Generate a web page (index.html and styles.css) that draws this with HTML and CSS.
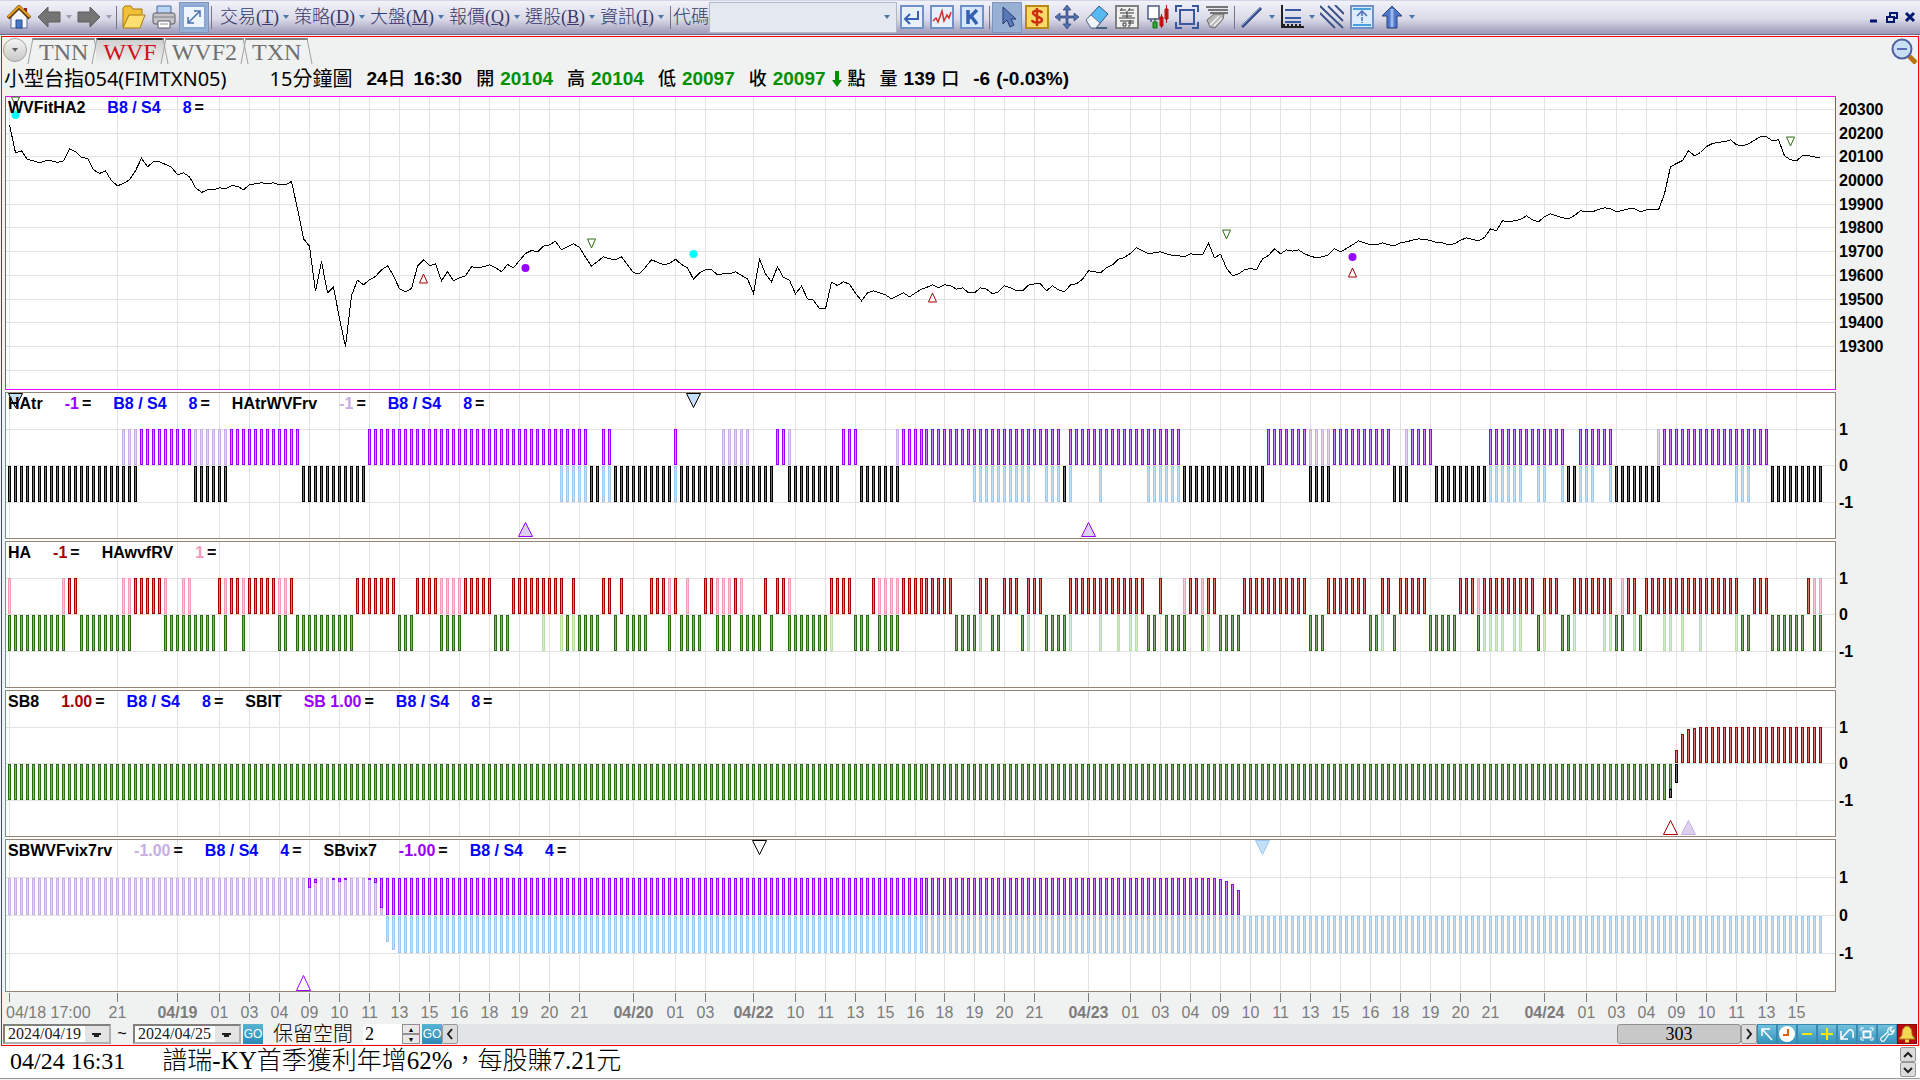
FILE: index.html
```html
<!DOCTYPE html>
<html lang="zh-Hant">
<head>
<meta charset="utf-8">
<title>小型台指054(FIMTXN05)</title>
<link rel="stylesheet" href="styles.css">
</head>
<body>
<header class="toolbar">
  <button class="tool" aria-label="首頁"><svg width="24" height="24" viewBox="0 0 24 24"><path d="M17 3h3v6h-3z" fill="#a02010"/><path d="M4 12v11h16V12l-8-8z" fill="#f4f6fc" stroke="#5868a0"/><path d="M1 13L12 2l11 11" fill="none" stroke="#5a3a10" stroke-width="4"/><path d="M1 12L12 1.500l11 10.500" fill="none" stroke="#e8a020" stroke-width="2"/><path d="M9 23v-8h6v8z" fill="#4878c8" stroke="#284888"/></svg></button>
  <button class="tool" aria-label="上一頁"><svg width="24" height="24" viewBox="0 0 24 24"><path d="M1 12L11 2v5h12v10H11v5z" fill="#747474" stroke="#5c5c5c"/></svg></button>
  <button class="caret dim" aria-label="上一頁清單"></button>
  <button class="tool" aria-label="下一頁"><svg width="24" height="24" viewBox="0 0 24 24"><path d="M23 12L13 2v5H1v10h12v5z" fill="#747474" stroke="#5c5c5c"/></svg></button>
  <button class="caret dim" aria-label="下一頁清單"></button>
  <i class="sep"></i>
  <button class="tool" aria-label="開啟"><svg width="24" height="24" viewBox="0 0 24 24"><path d="M1 22V3l2-2h6l2 3h9v5" fill="#f0c038" stroke="#a87808"/><path d="M1 23l6-13h16l-5 13z" fill="#ffe070" stroke="#a87808"/></svg></button>
  <button class="tool" aria-label="列印"><svg width="24" height="24" viewBox="0 0 24 24"><path d="M5 9V1h14v8" fill="#b8d4f4" stroke="#4868a0"/><rect x="1" y="8" width="22" height="11" rx="2" fill="#c4c4c8" stroke="#5c5c60"/><path d="M2 12h20" stroke="#808084"/><path d="M6 16h12v7H6z" fill="#fff" stroke="#5c5c60"/><path d="M8 19h8" stroke="#909090"/></svg></button>
  <button class="tool on" aria-label="全螢幕"><svg width="24" height="24" viewBox="0 0 24 24"><rect x="1" y="1" width="22" height="22" fill="#eef4fc" stroke="#88a8d8" stroke-width="2"/><path d="M7 17L17 7M12 6h6v6M6 12v6h6" fill="none" stroke="#4870b0" stroke-width="1.500"/></svg></button>
  <i class="sep"></i>
  <nav class="menus">
    <button class="menu">交易(<u>T</u>)<span class="tri"></span></button>
    <button class="menu">策略(<u>D</u>)<span class="tri"></span></button>
    <button class="menu">大盤(<u>M</u>)<span class="tri"></span></button>
    <button class="menu">報價(<u>Q</u>)<span class="tri"></span></button>
    <button class="menu">選股(<u>B</u>)<span class="tri"></span></button>
    <button class="menu">資訊(<u>I</u>)<span class="tri"></span></button>
  </nav>
  <i class="sep"></i>
  <label class="code-label" for="code">代碼</label>
  <span class="combo"><input id="code" type="text"><span class="tri"></span></span>
  <button class="tool" aria-label="輸入"><svg width="24" height="24" viewBox="0 0 24 24"><rect x="1" y="1" width="22" height="22" fill="#e8f0fc" stroke="#7090c8" stroke-width="2"/><path d="M18 6v8H6M10 9l-5 5 5 5" fill="none" stroke="#3860b0" stroke-width="2"/></svg></button>
  <button class="tool" aria-label="走勢圖"><svg width="24" height="24" viewBox="0 0 24 24"><rect x="1" y="1" width="22" height="22" fill="#e8f0fc" stroke="#7090c8" stroke-width="2"/><path d="M3 16l3-3 2 4 4-11 2 10 3-6 2 3 2-6" fill="none" stroke="#d03028" stroke-width="1.500"/></svg></button>
  <button class="tool" aria-label="K線圖"><svg width="24" height="24" viewBox="0 0 24 24"><rect x="1" y="1" width="22" height="22" fill="#d8e8fc" stroke="#7090c8" stroke-width="2"/><path d="M8 5v14M17 5l-8 8M11 11l6 8" fill="none" stroke="#3860b0" stroke-width="3.500"/></svg></button>
  <i class="sep"></i>
  <button class="tool on" aria-label="選取"><svg width="24" height="24" viewBox="0 0 24 24"><path d="M8 2v17l4-4 3 7 4-2-3-6h5z" fill="#5878b8" stroke="#283c70"/></svg></button>
  <button class="tool" aria-label="下單"><svg width="24" height="24" viewBox="0 0 24 24"><rect x="1" y="1" width="22" height="22" fill="#fcd868" stroke="#b88818" stroke-width="2"/><path d="M17 8c-1-3-9-3-9 0s9 4 9 7-9 4-10 0M12 3v18" fill="none" stroke="#c83010" stroke-width="2.500"/></svg></button>
  <button class="tool" aria-label="移動"><svg width="24" height="24" viewBox="0 0 24 24"><path d="M12 0l4 5h-3v6h6V8l5 4-5 4v-3h-6v6h3l-4 5-4-5h3v-6H5v3l-5-4 5-4v3h6V5H8z" fill="#5070b0" stroke="#2c4070" stroke-width=".7"/></svg></button>
  <button class="tool" aria-label="橡皮擦"><svg width="24" height="24" viewBox="0 0 24 24"><path d="M1 15L14 1l9 8-12 14H6z" fill="#58b8f0" stroke="#385880"/><path d="M1 15l5-5 9 8-4 5H6z" fill="#f0f4f8" stroke="#687890"/><path d="M11 23h11" stroke="#486080" stroke-width="2"/></svg></button>
  <button class="tool" aria-label="籌碼"><svg width="24" height="24" viewBox="0 0 24 24"><rect x="1" y="1" width="22" height="22" fill="#f0f0f0" stroke="#808080" stroke-width="2"/><path d="M7 3L5 6M6 5h5M15 3l-2 3M14 5h5M5 8h14M7 11h10M4 13h16M5 16h14M8 18v3h3v-3zM15 15v6h-2M13 18h6M12 6v7" fill="none" stroke="#383838"/></svg></button>
  <button class="tool" aria-label="K棒"><svg width="24" height="24" viewBox="0 0 24 24"><path d="M6 14h8V1H3v13h3M6 14v3" fill="#fff" stroke="#4c5c80" stroke-width="1.500"/><path d="M8 17h4v6H8zM10 13v4" fill="#30a830" stroke="#107010"/><path d="M15 12h3v9h-3zM16.500 9v14M20 4h3v10h-3zM21.500 0v18" fill="#e82018" stroke="#b01008"/></svg></button>
  <button class="tool" aria-label="框選"><svg width="24" height="24" viewBox="0 0 24 24"><rect x="5" y="5" width="14" height="14" fill="none" stroke="#3858a0" stroke-width="2"/><path d="M1 7V1h6M17 1h6v6M23 17v6h-6M7 23H1v-6" fill="none" stroke="#3858a0" stroke-width="2"/></svg></button>
  <button class="tool" aria-label="圖層"><svg width="24" height="24" viewBox="0 0 24 24"><path d="M1 2h22M3 5h20M5 8h18" stroke="#505050" stroke-width="1.500"/><path d="M2 15l7-6h10l-1 5-8 9-5-1z" fill="#b8b8b8" stroke="#686868"/><path d="M5 20l9-9M9 21l8-8" stroke="#f0f0f0" stroke-width="1.500"/></svg></button>
  <i class="sep"></i>
  <button class="tool" aria-label="畫線"><svg width="24" height="24" viewBox="0 0 24 24"><path d="M2 22L21 3" stroke="#304880" stroke-width="3"/><path d="M2 21L20 3" stroke="#7898d8"/></svg></button>
  <button class="caret" aria-label="畫線清單"></button>
  <button class="tool" aria-label="水平線"><svg width="24" height="24" viewBox="0 0 24 24"><path d="M2 0v22h22" fill="none" stroke="#202020" stroke-width="2"/><path d="M5 5h16M5 13h16M5 17h16" stroke="#3858a0" stroke-width="2"/><path d="M3 20h20" stroke="#202020" stroke-width="2" stroke-dasharray="2 2"/></svg></button>
  <button class="caret" aria-label="水平線清單"></button>
  <button class="tool" aria-label="平行線"><svg width="24" height="24" viewBox="0 0 24 24"><path d="M0 8l15 15M0 1l23 22M8 1l15 15M15 0l9 9" stroke="#3c5488" stroke-width="2"/></svg></button>
  <button class="tool" aria-label="頂部"><svg width="24" height="24" viewBox="0 0 24 24"><rect x="1" y="1" width="22" height="22" fill="#dcecfc" stroke="#7090c8" stroke-width="2"/><path d="M3 4h18M3 20h18" stroke="#48a0e0" stroke-width="2"/><path d="M12 7v11" stroke="#4868b8" stroke-width="1.500" stroke-dasharray="4 1"/><path d="M7 11l5-5 5 5" fill="none" stroke="#4868b8" stroke-width="1.500"/></svg></button>
  <button class="tool" aria-label="箭頭"><svg width="24" height="24" viewBox="0 0 24 24"><path d="M12 1L2 11h5v12h10V11h5z" fill="#5078c8" stroke="#284080"/><path d="M12 4v18" stroke="#98b8f0" stroke-width="3"/></svg></button>
  <button class="caret" aria-label="箭頭清單"></button>
  <span class="window-buttons">
    <button aria-label="最小化"><svg width="12" height="12"><path d="M2 10h7" stroke="#001870" stroke-width="3"/></svg></button>
    <button aria-label="還原"><svg width="12" height="12"><path d="M4 5V2h7v5H8M1 6h7v5H1z" fill="none" stroke="#001870" stroke-width="2"/></svg></button>
    <button aria-label="關閉"><svg width="12" height="12"><path d="M2 2l8 8M10 2l-8 8" stroke="#001870" stroke-width="3"/></svg></button>
  </span>
</header>

<main class="frame">
  <div class="tabs">
    <button class="tab-list" aria-label="分頁清單"><span class="tri"></span></button>
    <button class="tab">TNN</button>
    <button class="tab active">WVF</button>
    <button class="tab">WVF2</button>
    <button class="tab">TXN</button>
    <button class="zoom-out" aria-label="縮小"><svg width="26" height="26" viewBox="0 0 26 26"><path d="M18 18l7 7" stroke="#c07018" stroke-width="5"/><circle cx="11" cy="11" r="9.500" fill="#c8e0f4" stroke="#5060a0" stroke-width="2"/><path d="M6 11h10" stroke="#3848a0" stroke-width="1.500"/></svg></button>
  </div>
  <h1 class="quote">
    <span class="name">小型台指054(FIMTXN05)</span>
    <span class="period">15分鐘圖</span>
    <span class="pair stamp"><b>24<i>日</i></b><b>16:30</b></span>
    <span class="pair"><i>開</i><b class="down">20104</b></span>
    <span class="pair"><i>高</i><b class="down">20104</b></span>
    <span class="pair"><i>低</i><b class="down">20097</b></span>
    <span class="pair"><i>收</i><b class="down">20097</b><svg width="10" height="18"><path d="M3 1h4v9h3l-5 7-5-7h3z" fill="#009000"/></svg><i>點</i></span>
    <span class="pair"><i>量</i><b>139</b><i>口</i></span>
    <span class="pair"><b>-6</b><b>(-0.03%)</b></span>
  </h1>

  <div class="charts">
    <section class="row">
      <div class="plot"><svg class="canvas" id="price"></svg>
        <p class="legend"><b>WVFitHA2</b><b class="blue">B8 / S4</b><b><em class="blue">8</em>=</b></p></div>
      <svg class="scale" id="price-scale"></svg>
    </section>
    <section class="row">
      <div class="plot"><svg class="canvas" id="hatr"></svg>
        <p class="legend"><b>HAtr</b><b><em class="purple">-1</em>=</b><b class="blue">B8 / S4</b><b><em class="blue">8</em>=</b><b>HAtrWVFrv</b><b><em class="lavender">-1</em>=</b><b class="blue">B8 / S4</b><b><em class="blue">8</em>=</b></p></div>
      <svg class="scale" id="hatr-scale"></svg>
    </section>
    <section class="row">
      <div class="plot"><svg class="canvas" id="ha"></svg>
        <p class="legend"><b>HA</b><b><em class="red">-1</em>=</b><b>HAwvfRV</b><b><em class="pink">1</em>=</b></p></div>
      <svg class="scale" id="ha-scale"></svg>
    </section>
    <section class="row">
      <div class="plot"><svg class="canvas" id="sb"></svg>
        <p class="legend"><b>SB8</b><b><em class="red">1.00</em>=</b><b class="blue">B8 / S4</b><b><em class="blue">8</em>=</b><b>SBIT</b><b><em class="purple">SB 1.00</em>=</b><b class="blue">B8 / S4</b><b><em class="blue">8</em>=</b></p></div>
      <svg class="scale" id="sb-scale"></svg>
    </section>
    <section class="row">
      <div class="plot"><svg class="canvas" id="vix"></svg>
        <p class="legend"><b>SBWVFvix7rv</b><b><em class="lavender">-1.00</em>=</b><b class="blue">B8 / S4</b><b><em class="blue">4</em>=</b><b>SBvix7</b><b><em class="purple">-1.00</em>=</b><b class="blue">B8 / S4</b><b><em class="blue">4</em>=</b></p></div>
      <svg class="scale" id="vix-scale"></svg>
    </section>
    <div class="row axis-row"><svg class="axis" id="time"></svg></div>
  </div>

  <footer class="controls">
    <select class="date" aria-label="起始日期"><option>2024/04/19</option></select>
    <span class="tilde">~</span>
    <select class="date" aria-label="結束日期"><option>2024/04/25</option></select>
    <button class="go">GO</button>
    <label class="space-label" for="space">保留空間</label>
    <span class="spin"><input id="space" type="text" value="2"><span class="spin-buttons"><button aria-label="增加">▴</button><button aria-label="減少">▾</button></span></span>
    <button class="go">GO</button>
    <button class="arrow" aria-label="向左捲動"><svg width="8" height="12"><path d="M6 1L2 6l4 5" fill="none" stroke="#202020" stroke-width="2"/></svg></button>
    <div class="track"><button class="thumb">303</button></div>
    <button class="arrow" aria-label="向右捲動"><svg width="8" height="12"><path d="M2 1l4 5-4 5" fill="none" stroke="#202020" stroke-width="2"/></svg></button>
    <button class="mini" aria-label="左上"><svg width="18" height="18"><path d="M4 11V4h8M4 4l10 11" fill="none" stroke="#fff" stroke-width="1.500"/></svg></button>
    <button class="mini" aria-label="時間"><svg width="18" height="18"><circle cx="9" cy="9" r="8" fill="#fff"/><path d="M10 4v6H5" fill="none" stroke="#e06010" stroke-width="2"/></svg></button>
    <button class="mini" aria-label="縮小間距"><svg width="18" height="18"><path d="M4 9h10" stroke="#ffe800" stroke-width="2"/></svg></button>
    <button class="mini" aria-label="放大間距"><svg width="18" height="18"><path d="M3 9h12M9 3v12" stroke="#ffe800" stroke-width="2"/></svg></button>
    <button class="mini" aria-label="還原"><svg width="18" height="18"><path d="M3 6v8h7M3 14l8-9c4-1 5 3 4 8" fill="none" stroke="#fff" stroke-width="1.500"/></svg></button>
    <button class="mini" aria-label="全圖"><svg width="18" height="18"><rect x="5.500" y="6.500" width="7" height="6" fill="none" stroke="#fff" stroke-width="2"/><path d="M3 6V3h3M12 3h3v3M15 12v3h-3M6 15H3v-3" fill="none" stroke="#fff"/></svg></button>
    <button class="mini" aria-label="設定"><svg width="18" height="18"><path d="M3 13l7-6c-1-3 1-5 4-5l-2 3 2 2 2-2c0 3-2 5-5 4l-5 7c-2 1-4-1-3-3z" fill="none" stroke="#fff" stroke-width="1.200"/></svg></button>
    <button class="mini bell" aria-label="警示"><svg width="18" height="18"><path d="M9 1c-4 1-5 4-5 9l-3 4h16l-3-4c0-5-1-8-5-9z" fill="#f0d850" stroke="#a88820"/><path d="M7 16h4" stroke="#f0d850" stroke-width="3"/></svg></button>
  </footer>
</main>

<section class="news">
  <p><time>04/24 16:31</time><a class="headline" href="#">譜瑞-KY首季獲利年增62%，每股賺7.21元</a></p>
  <div class="news-scroll">
    <button class="arrow" aria-label="上一則"><svg width="12" height="8"><path d="M2 6l4-4 4 4" fill="none" stroke="#202020" stroke-width="2"/></svg></button>
    <button class="arrow" aria-label="下一則"><svg width="12" height="8"><path d="M2 2l4 4 4-4" fill="none" stroke="#202020" stroke-width="2"/></svg></button>
  </div>
</section>
<script src="chart.js"></script>
</body>
</html>
```
FILE: styles.css
```css
* { box-sizing: border-box; }
body {
  margin: 0;
  height: 100vh;
  min-height: 640px;
  display: flex;
  flex-direction: column;
  background: #f0f2f1;
  font-family: "Liberation Sans", "Noto Sans CJK TC", sans-serif;
  font-size: 16px;
  color: #000;
}
button { border: 0; padding: 0; background: none; font: inherit; color: inherit; }
svg { display: block; }
.tri { border: 3px solid transparent; border-top: 4px solid #4878a8; border-bottom: 0; }

/* toolbar */
.toolbar {
  display: flex;
  flex: none;
  align-items: center;
  height: 35px;
  padding: 0 4px 1px;
  background: linear-gradient(#f2f2fa, #dadae8 55%, #9c98b8);
  border-top: 1px solid #d4d4e8;
  border-bottom: 1px solid #6c6c8c;
}
.tool { width: 30px; height: 31px; display: grid; place-items: center; flex: none; }
.tool.on { background: #98b0d4; border: 1px solid #7c94bc; }
.caret { width: 10px; height: 24px; display: grid; place-items: center; flex: none; }
.caret::before { content: ""; border: 3px solid transparent; border-top: 4px solid #4878a8; border-bottom: 0; }
.caret.dim::before { border-top-color: #a0a0b0; }
.sep { width: 1px; height: 23px; margin: 0 2px; background: #74748c; flex: none; }
.menus { display: flex; gap: 5px; padding: 0 4px 0 6px; }
.menu {
  display: flex;
  align-items: center;
  font: 300 18px/24px "Liberation Serif", "Noto Sans CJK TC", serif;
  color: #38386c;
}
.menu .tri { margin-left: 4px; }
.code-label { font: 300 18px/24px "Liberation Serif", "Noto Sans CJK TC", serif; color: #38386c; }
.combo { display: flex; align-items: center; width: 188px; height: 31px; padding-right: 6px; background: #e4e8f0; border: 1px solid #b0b8c8; }
.combo input { flex: 1; min-width: 0; border: 0; background: none; font: inherit; }
.window-buttons { display: flex; gap: 6px; margin-left: auto; }

/* framed work area */
.frame { flex: 1 1 0; min-height: 0; display: flex; flex-direction: column; margin: 1px 1px 0; border: 1px solid #f00; }
.tabs { display: flex; flex: none; gap: 1px; height: 26px; padding: 1px 1px 0; align-items: flex-start; }
.tab-list { display: grid; place-items: center; width: 24px; height: 24px; margin-right: 4px; border: 1px solid #a0a0a0; border-radius: 12px; background: linear-gradient(#f4f4f4, #c8c8c8); }
.tab-list .tri { border-top-color: #606060; }
.tab {
  position: relative;
  height: 26px;
  padding: 0 7px;
  border-top: 2px solid #808080;
  font: 24px/24px "Liberation Serif", serif;
  color: #707070;
}
.tab::before, .tab::after { content: ""; position: absolute; top: -2px; bottom: 0; width: 1px; background: #a0a0a0; }
.tab::before { left: -2px; transform: skewX(-11deg); }
.tab::after { right: -2px; transform: skewX(11deg); }
.tab.active { border-top-color: #303030; background: linear-gradient(#d0d0d0, #f0f2f1); color: #d01020; }
.zoom-out { margin-left: auto; }
.quote { display: flex; flex: none; align-items: center; gap: 14px; height: 33px; margin: 0; padding: 0 2px 2px; font-size: 20px; font-weight: 400; line-height: 28px; white-space: nowrap; }
.quote i { font-style: normal; font-weight: 500; font-size: 18px; }
.quote b { font-size: 19px; }
.name, .period { font-family: "Noto Sans", "Noto Sans CJK TC", sans-serif; }
.name { margin-right: 29px; }
.pair { display: flex; align-items: center; gap: 6px; }
.pair b { display: flex; align-items: center; }
.pair.stamp { gap: 8px; }
.down { color: #009000; }

/* panels */
.charts {
  flex: 1 1 0;
  min-height: 0;
  display: grid;
  grid-template-rows: minmax(0, 294fr) minmax(0, 147fr) minmax(0, 147fr) minmax(0, 147fr) minmax(0, 153fr) 29px;
  row-gap: 2px;
  padding-left: 3px;
  background: linear-gradient(#fff, #fff) no-repeat 3px 0 / calc(100% - 85px) calc(100% - 31px);
}
.row { display: grid; grid-template-columns: minmax(0, 1fr) 82px; grid-template-rows: minmax(0, 1fr); min-height: 0; }
.plot { display: grid; grid-template: minmax(0, 1fr) / minmax(0, 1fr); min-width: 0; min-height: 0; background: #fff; }
.plot > * { grid-area: 1 / 1; }
.canvas { width: 100%; height: 100%; min-height: 0; }
.scale { width: 82px; height: 100%; overflow: visible; font-weight: 700; }
.axis { width: 100%; height: 30px; overflow: visible; fill: #7c7c7c; }
.axis-row { margin-top: -2px; height: 31px; }
.legend { display: flex; gap: 22px; margin: 3px 3px; height: 18px; line-height: 18px; white-space: nowrap; z-index: 1; }
.legend em { font-style: normal; padding-right: 3px; }
.blue { color: #0000ff; }
.purple { color: #9900ff; }
.lavender { color: #c8aee4; }
.red { color: #a80000; }
.pink { color: #f49ab8; }

/* bottom controls */
.controls { display: flex; flex: none; align-items: center; height: 22px; padding: 0 1px; }
.date {
  width: 108px; height: 20px; padding: 0 0 0 3px; appearance: none;
  border: 2px solid #808080; border-right-color: #b0b0b0; border-bottom-color: #b0b0b0; border-radius: 0;
  font: 16px/16px "Liberation Serif", serif; color: #202020;
  background: linear-gradient(#202020, #202020) no-repeat right 10px top 9px / 5px 2px, linear-gradient(#202020, #202020) no-repeat right 8px top 7px / 9px 2px, linear-gradient(#e4e4e4, #e4e4e4) no-repeat right / 24px 100%, #fff;
}
.tilde { width: 22px; text-align: center; }
.go { width: 20px; height: 20px; margin-left: 2px; background: linear-gradient(#58b4d4, #2c88b4); color: #fff; font-size: 12px; line-height: 20px; }
.space-label { padding: 0 10px 0 10px; font-size: 20px; font-weight: 300; line-height: 20px; }
.spin { display: flex; height: 20px; background: #fff; }
.spin input { width: 39px; border: 0; padding: 0 2px; font: 18px/20px "Liberation Serif", serif; }
.spin-buttons { display: grid; width: 18px; }
.spin-buttons button { height: 10px; border: 1px solid #909090; background: #e8e8e8; font-size: 8px; line-height: 7px; }
.arrow { display: grid; place-items: center; width: 16px; height: 20px; border: 1px solid #989898; border-radius: 2px; background: #dcdcdc; flex: none; }
.track { flex: 1; display: flex; justify-content: flex-end; height: 20px; background: #e2e4e6; }
.thumb { width: 124px; border: 1px solid #909090; border-radius: 3px; background: #c8c8c8; font: 18px/18px "Liberation Serif", serif; }
.mini { display: grid; place-items: center; width: 20px; height: 20px; border: 1px solid #3888b0; background: linear-gradient(#70c0dc, #3494bc); flex: none; }
.mini.bell { background: #b80c10; border-color: #900000; }

/* news ticker */
.news { display: flex; flex: none; justify-content: space-between; height: 33px; margin-bottom: 1px; padding-left: 10px; background: #fff; border-bottom: 1px solid #989898; }
.news p { display: flex; gap: 37px; margin: 0; font: 300 24px/30px "Liberation Serif", "Noto Sans CJK TC", serif; }
.news time { font-weight: 400; }
.headline { font-size: 25px; color: #000; text-decoration: none; }
.news-scroll { display: grid; grid-template-rows: 1fr 1fr; width: 20px; padding: 1px 0; }
.news-scroll .arrow { height: auto; }
```
FILE: chart.js
```js
const W = 1831;
const COLORS = {
  p: ['#9900ff', '#cc88ff'], v: ['#c8aee4', '#e0d4f0'], k: ['#000000', '#707070'],
  b: ['#9ccaf2', '#c4e0f8'], r: ['#a80000', '#d87878'], n: ['#f49ab8', '#fac8d8'],
  g: ['#2c6c10', '#88b078'], l: ['#b8e0a4', '#d4ecc8']
};
// left-to-right centre of bar i
const X = i => 4.5 + 6 * i - (i >= 153 ? 1 : 0);
const rect = (i, y1, y2, c) =>
  `<rect x="${X(i) - 1}" y="${y1 + 0.5}" width="2" height="${Math.max(y2 - y1 - 1, 1)}" fill="${COLORS[c][1]}" stroke="${COLORS[c][0]}"/>`;
// "p22-30" draws colour p over bars 22..30
const runs = (text, y1, y2) => text.split(' ').map(t => {
  const [a, z = a] = t.slice(1).split('-').map(Number);
  let s = '';
  for (let i = a; i <= z; i++) s += rect(i, y1, y2, t[0]);
  return s;
}).join('');
const mark = (i, y, up, h, hw, stroke, fill = '#fff') => {
  const x = X(i), tip = up ? y : y + h, base = up ? y + h : y;
  return `<path d="M${x} ${tip}L${x + hw} ${base}H${x - hw}z" fill="${fill}" stroke="${stroke}"/>`;
};
const dot = (i, y, c) => `<circle cx="${X(i)}" cy="${y}" r="4" fill="${c}"/>`;

const TIMES = [[0, ''], [18, '21'], [28, '04/19'], [35, '01'], [40, '03'], [45, '04'], [50, '09'], [55, '10'], [60, '11'], [65, '13'], [70, '15'], [75, '16'], [80, '18'], [85, '19'], [90, '20'], [95, '21'],
  [104, '04/20'], [111, '01'], [116, '03'], [124, '04/22'], [131, '10'], [136, '11'], [141, '13'], [146, '15'], [151, '16'], [156, '18'], [161, '19'], [166, '20'], [171, '21'],
  [180, '04/23'], [187, '01'], [192, '03'], [197, '04'], [202, '09'], [207, '10'], [212, '11'], [217, '13'], [222, '15'], [227, '16'], [232, '18'], [237, '19'], [242, '20'], [247, '21'],
  [256, '04/24'], [263, '01'], [268, '03'], [273, '04'], [278, '09'], [283, '10'], [288, '11'], [293, '13'], [298, '15']];

function panel(id, h, border, levels, body) {
  const svg = document.getElementById(id);
  svg.setAttribute('viewBox', `0 0 ${W} ${h}`);
  svg.setAttribute('preserveAspectRatio', 'none');
  let s = `<g shape-rendering="crispEdges"><rect x=".5" y=".5" width="${W - 1}" height="${h - 1}" fill="none" stroke="${border}"/><g stroke="#e2e2e2">`;
  for (const [y] of levels) s += `<path d="M1 ${y + 0.5}H${W - 1}"/>`;
  for (const [i] of TIMES) s += `<path d="M${X(i)} 1V${h - 1}"/>`;
  svg.innerHTML = s + '</g></g>' + body;
  document.getElementById(id + '-scale').innerHTML = levels.filter(l => l[1] !== '')
    .map(([y, t]) => `<text x="3" y="${y / h * 100}%" dy="6">${t}</text>`).join('');
}
const crisp = s => `<g shape-rendering="crispEdges">${s}</g>`;

// price samples, one per bar, in thirds of a pixel from the top of the scale
const PRICE = [103,187,181,207,211,217,211,211,216,211,175,183,202,203,238,249,241,271,286,279,268,241,203,229,214,214,222,230,253,247,259,291,306,298,298,292,295,286,287,298,283,280,277,280,277,283,283,273,355,445,467,602,513,607,590,684,768,615,569,583,568,558,538,526,556,595,604,594,527,508,526,520,571,544,571,562,556,529,532,529,523,531,544,522,532,510,489,480,484,467,463,452,478,469,460,471,500,527,513,499,505,508,499,523,547,
  550,530,508,515,523,519,506,522,532,566,547,538,538,553,550,550,544,555,565,609,506,550,574,529,561,569,610,587,625,629,655,655,575,585,574,581,608,631,607,601,607,613,625,616,607,619,607,596,591,583,592,583,585,596,592,607,607,592,596,610,604,586,592,601,601,584,580,580,601,586,598,604,583,580,566,541,544,547,532,523,506,501,488,472,481,490,487,484,490,495,496,499,490,492,493,458,502,491,533,556,550,538,534,538,505,495,475,
  490,478,482,478,490,497,502,499,493,475,484,474,463,451,457,463,463,457,463,466,457,454,449,445,448,449,457,457,463,460,449,442,447,451,441,415,421,391,394,391,387,376,388,394,379,370,376,382,385,375,361,364,364,357,352,355,364,360,355,355,364,358,358,358,310,229,219,210,181,196,186,168,159,155,154,148,163,166,160,149,139,139,151,148,196,208,211,196,196,199,203];
const line = PRICE.map((v, i) => `${X(Math.min(i, 302))},${(v / 3 - 5.5).toFixed(1)}`).join(' ');
panel('price', 294, '#ff00ff',
  [[13, '20300'], [37, '20200'], [60, '20100'], [84, '20000'], [108, '19900'], [131, '19800'], [155, '19700'], [179, '19600'], [203, '19500'], [226, '19400'], [250, '19300'], [274, '']],
  crisp(`<polyline points="${line}" fill="none" stroke="#000"/>`) +
  mark(1, 1, false, 9, 4, '#2c6c10') + dot(1, 19, '#0ff') + mark(69, 178, true, 9, 4, '#a80000') + dot(86, 172, '#9900ff') +
  mark(97, 143, false, 9, 4, '#2c6c10') + dot(114, 158, '#0ff') + mark(154, 197, true, 9, 4, '#a80000') + mark(203, 134, false, 9, 4, '#2c6c10') +
  dot(224, 161, '#9900ff') + mark(224, 172, true, 9, 4, '#a80000') + mark(297, 41, false, 9, 4, '#2c6c10'));

panel('hatr', 147, '#948474', [[37, '1'], [73, '0'], [110, '-1']],
  crisp(runs('v19-21 p22-30 v31-36 p37-48 p60-96 p99-100 p111 v119-123 p128-129 v130 p139-141 v148 p149-175 p177-195 p210-216 v217-220 p221-230 v233 p234-237 p247-259 p262-267 v275 p276-293', 37, 73) +
    runs('k0-21 k31-36 k49-59 b92-96 k97-98 b99-100 k101-110 b111 k112-127 k130-138 k142-148 b161-170 b173-175 k176 b177 b182 b190-195 k196-209 k217-220 k231-233 k238-246 b247-252 b255-256 b259 k260-261 b262-264 b267 k268-275 b288-290 k294-302', 74, 110)) +
  mark(1, 1.5, false, 14, 7, '#000', '#c4e0f8') + mark(114, 1.5, false, 14, 7, '#000', '#c4e0f8') +
  mark(86, 130.5, true, 14, 7, '#9900ff', '#dcd0ec') + mark(180, 130.5, true, 14, 7, '#9900ff', '#dcd0ec'));

panel('ha', 147, '#948474', [[37, '1'], [73, '0'], [110, '-1']],
  crisp(runs('n0 n9 r10-11 n19-20 r21-25 n26 n29-30 r35 n36 r37-38 n39 r40-44 n45-46 r47 r58-64 r68-71 n72-75 r76-80 r84-92 r94 r99-100 r102 r107-109 n110 r111 n113 r116-117 n118-120 r121 n122 r126 r128-129 n130 r137-140 r144 n145-148 r149-157 r162-163 r166-168 r170-172 r177-189 r192 n196 r197-198 n199 r200-201 r206-216 r220-226 r229-230 r232-236 r242-244 n245 r246-254 r256-258 r261-267 n269 r270-271 r273-288 r291-293 r300 n301-302', 37, 73) +
    runs('g0-9 g12-20 g26-34 g36 g39 g45-46 g48-57 g65-67 g72-75 g81-83 l89 l92 g93 l94 g95-98 g101 g103-106 g110 g112-115 g118-120 g122-125 g127 g130-136 l137 g141-143 g145-148 g158-161 l162 g164-165 g169 l170 g173-176 l177 l182 l185 l187-188 g190-191 g193-196 g199 l200 g202-205 g217-219 g227-228 l229 g231 g237-241 g245 l246-249 l251-252 g255 l256 g259-260 l261 l266-267 g268-269 l271 g272 l276-277 l279 l282 l288 g289-290 g294-299 g301-302', 74, 110)));

panel('sb', 147, '#948474', [[37, '1'], [73, '0'], [110, '-1']],
  crisp(runs('g0-276', 74, 110) + runs('g277', 74, 99) + runs('k277', 99, 108) + runs('k278', 74, 93) + runs('r278', 60, 73) +
    runs('r279', 44, 73) + runs('r280', 39, 73) + runs('r281', 38, 73) + runs('r282-302', 37, 73)) +
  mark(277, 130.5, true, 14, 7, '#a80000') + mark(280, 130.5, true, 14, 7, '#c8aee4', '#dcd0ec'));

panel('vix', 153, '#948474', [[38, '1'], [76, '0'], [114, '-1']],
  crisp(runs('v0-62', 39, 76) + runs('p50', 39, 49) + runs('p51', 40, 44) + runs('p54 p56', 39, 41) + runs('p55', 39, 43) + runs('p60', 39, 40) + runs('p61', 39, 44) +
    runs('p62', 39, 69) + runs('p63-201', 39, 76) + runs('p202', 40, 76) + runs('p203', 42, 76) + runs('p204', 45, 76) + runs('p205', 51, 76) +
    runs('b63', 77, 103) + runs('b64', 77, 111) + runs('b65-302', 77, 114)) +
  mark(49, 136.5, true, 15, 7, '#9900ff') + mark(125, 1.5, false, 14, 7, '#000') + mark(209, 1.5, false, 14, 7, '#9ccaf2', '#c4e0f8'));

document.getElementById('time').innerHTML = TIMES.map(([i, t]) => {
  const x = X(i) / W * 100 + '%';
  return `<line x1="${x}" x2="${x}" y1="1" y2="10" stroke="#7c7c7c" shape-rendering="crispEdges"/>` +
    (t ? `<text x="${x}" y="26" text-anchor="middle" ${t.includes('/') ? 'font-weight="700"' : ''}>${t}</text>` : '');
}).join('') + '<text x="1" y="26">04/18 17:00</text>';
```
